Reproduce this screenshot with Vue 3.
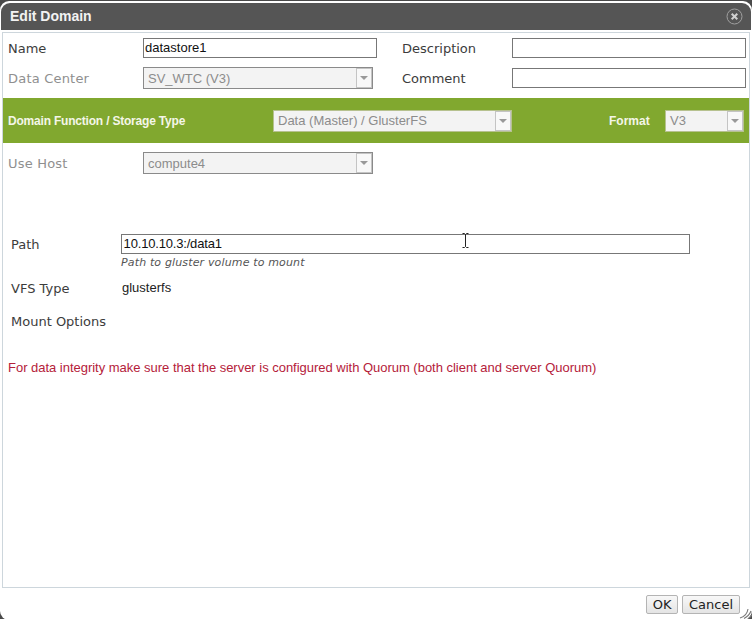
<script setup>
const rowsTop = [
  { label: 'Name', value: 'datastore1', side: 'Description' },
]
</script>

<template>
  <div class="page">
    <div class="dialog">
      <header class="head">
        <span class="title">Edit Domain</span>
        <svg class="close" width="17" height="17" viewBox="0 0 17 17">
          <circle cx="8.5" cy="8.5" r="7.5" fill="none" stroke="#a0a0a0" stroke-width="1" />
          <path d="M5.700 5.700l5.600 5.600M11.300 5.700l-5.600 5.600" stroke="#d0d0d0" stroke-width="2" />
        </svg>
      </header>
      <main class="panel">
        <div class="top">
          <div class="row r1">
            <label class="lab name">Name</label>
            <div class="input w234 txt">{{ rowsTop[0].value }}</div>
            <label class="lab desc">Description</label>
            <div class="input w234"></div>
          </div>
          <div class="row r2">
            <label class="lab name off">Data Center</label>
            <div class="select w230 s22"><span>SV_WTC (V3)</span><i class="arrow"></i></div>
            <label class="lab desc gapc">Comment</label>
            <div class="input w234"></div>
          </div>
        </div>
        <div class="band">
          <b class="bandlab">Domain Function / Storage Type</b>
          <div class="select plain b239"><span>Data (Master) / GlusterFS</span><i class="arrow"></i></div>
          <b class="fmt">Format</b>
          <div class="select plain b79"><span>V3</span><i class="arrow"></i></div>
        </div>
        <div class="row r3">
          <label class="lab name off">Use Host</label>
          <div class="select w230 s22"><span>compute4</span><i class="arrow"></i></div>
        </div>
        <div class="nfs">
          <div class="prow">
            <label class="lab plab">Path</label>
            <div class="input wpath txt">10.10.10.3:/data1</div>
          </div>
          <div class="hint">Path to gluster volume to mount</div>
          <div class="prow vfs">
            <label class="lab plab">VFS Type</label>
            <span class="val">glusterfs</span>
          </div>
          <div class="prow mnt">
            <label class="lab plab">Mount Options</label>
          </div>
        </div>
        <p class="warn">For data integrity make sure that the server is configured with Quorum (both client and server Quorum)</p>
      </main>
      <footer class="foot">
        <button class="btn ok">OK</button>
        <button class="btn">Cancel</button>
      </footer>
      <svg class="ibeam" width="9" height="15" viewBox="0 0 9 15">
        <path d="M1.500 .5h2l1 1 1-1h2M4.500 1.500v12M1.500 14.500h2l1-1 1 1h2" fill="none" stroke="#222" stroke-width="1" />
      </svg>
      <svg class="grip" width="13" height="13" viewBox="0 0 13 13">
        <path d="M1 12Q8 10 9 3M5 12.500Q10 10 12 5M9 12.800Q11.500 11 12.800 9" fill="none" stroke="#777" stroke-width="1.100" />
      </svg>
    </div>
  </div>
</template>

<style>
html, body { margin: 0; background: #fff; }
</style>

<style scoped>
.page {
  width: 752px;
  height: 619px;
  overflow: hidden;
  background: #4a4a4a;
  font-family: "Liberation Sans", Arial, sans-serif;
}
.dialog {
  position: relative;
  box-sizing: border-box;
  height: 619px;
  margin-top: 1px;
  background: #fff;
  border-radius: 9px;
  padding-top: 2px;
  display: flex;
  flex-direction: column;
}
.head {
  height: 27px;
  flex: none;
  background: #555;
  border-radius: 9px 9px 0 0;
  margin: 0 1px;
  display: flex;
  align-items: center;
  justify-content: space-between;
  padding: 0 8px 0 9px;
}
.title { color: #f2f2f2; font-weight: 700; font-size: 14px; position: relative; top: -1px; }
.panel {
  box-sizing: border-box;
  margin: 2px 2px 0 2px;
  width: 748px;
  height: 556px;
  flex: none;
  border: 1px solid #cdd6dc;
}
.row { display: flex; align-items: center; }
.lab { font-family: "DejaVu Sans", Verdana, sans-serif; font-size: 13px; color: #3c3c3c; white-space: nowrap; }
.off { color: #8f8f8f; letter-spacing: 0.2px; }
.name { width: 135px; margin-left: 5px; flex: none; }
.desc { width: 110px; margin-left: 25px; flex: none; letter-spacing: 0; }
.top { padding-top: 5px; }
.r1 { height: 20px; }
.r2 { height: 22px; margin-top: 9px; }
.gapc { margin-left: 29px; }
.input {
  box-sizing: border-box;
  height: 20px;
  background: #fff;
  border: 1px solid #777;
  flex: none;
}
.txt { font-size: 13px; line-height: 18px; padding-left: 1px; color: #111; }
.w234 { width: 234px; }
.wpath { width: 569px; letter-spacing: -0.18px; padding-left: 1.6px; }
.select {
  box-sizing: border-box;
  flex: none;
  display: flex;
  align-items: center;
  justify-content: space-between;
  background: #f3f3f3;
  border: 1px solid #8a8a8a;
  color: #8c8c8c;
  font-size: 13px;
  padding-left: 4px;
  height: 22px;
  position: relative;
}
.w230 { width: 230px; }
.arrow {
  box-sizing: border-box;
  width: 16px;
  height: 20px;
  background: #f8f8f8;
  border: 1px solid #c4c4c4;
  position: relative;
  flex: none;
}
.arrow::after {
  content: "";
  position: absolute;
  left: 3px;
  top: 7px;
  border-left: 4px solid transparent;
  border-right: 4px solid transparent;
  border-top: 4px solid #999;
}
.band {
  margin-top: 9px;
  height: 45px;
  background: #81a82f;
  display: flex;
  align-items: center;
  color: #f4f6e8;
  font-size: 12px;
  box-sizing: border-box;
}
.bandlab { margin-left: 5px; width: 265px; flex: none; letter-spacing: -0.2px; }
.plain { border: 1px solid #b6c18f; height: 22px; }
.b239 { width: 239px; }
.fmt { margin-left: 97px; width: 56px; flex: none; }
.b79 { width: 79px; }
.r3 { margin-top: 9px; height: 22px; }
.nfs { padding-top: 60px; }
.prow { display: flex; align-items: center; }
.plab { width: 110px; margin-left: 8px; flex: none; }
.hint {
  font-family: "DejaVu Sans", Verdana, sans-serif;
  font-style: italic;
  font-size: 11px;
  letter-spacing: 0.15px;
  color: #555;
  margin-left: 118px;
  margin-top: 2px;
  line-height: 14px;
}
.vfs { margin-top: 8px; height: 20px; }
.val { font-size: 13px; color: #222; margin-left: 1px; line-height: 20px; align-self: flex-start; }
.mnt { margin-top: 13px; height: 20px; }
.warn {
  margin: 30px 0 0 5px;
  font-size: 13px;
  line-height: 14px;
  letter-spacing: -0.02px;
  color: #b5213a;
}
.foot {
  flex: none;
  display: flex;
  justify-content: flex-end;
  gap: 4px;
  padding: 7px 12px 0 0;
}
.btn {
  box-sizing: border-box;
  height: 19px;
  padding: 0 6px;
  font-family: "DejaVu Sans", Verdana, sans-serif;
  font-size: 13px;
  line-height: 15px;
  color: #222;
  background: linear-gradient(#f8f8f8, #e4e4e4);
  border: 1px solid #b4b4b4;
  border-radius: 2px;
}
.ok { padding: 0 5.500px; }
.ibeam { position: absolute; left: 461px; top: 232px; }
.grip { position: absolute; right: 0; bottom: 1px; }
</style>
